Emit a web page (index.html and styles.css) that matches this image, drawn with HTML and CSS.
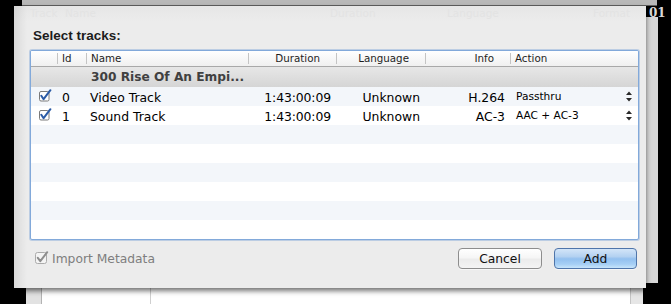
FILE: index.html
```html
<!DOCTYPE html>
<html>
<head>
<meta charset="utf-8">
<link rel="stylesheet" href="styles.css">
</head>
<body>
<div class="desk">
  <div class="titlebar"></div>
  <div class="winbody">
    <div class="wb-black"></div>
    <div class="wb-side"></div>
    <div class="wb-list"><div class="wb-col"></div><div class="wb-col2"></div></div>
    <div class="wb-scroll"></div>
    <div class="wb-gap"></div>
    <div class="wb-right"><span class="corner-text">01</span></div>
  </div>

  <div class="sheet">
    <div class="ghost">
      <span class="g1">Track</span><span class="g2">Name</span><span class="g3">Duration</span><span class="g4">Language</span><span class="g5">Format</span>
    </div>
    <div class="title">Select tracks:</div>

    <div class="table">
      <div class="row thead">
        <div class="th"></div>
        <div class="th sep">Id</div>
        <div class="th sep">Name</div>
        <div class="th sep right">Duration</div>
        <div class="th sep right">Language</div>
        <div class="th sep right">Info</div>
        <div class="th sep">Action</div>
      </div>
      <div class="group">300 Rise Of An Empi...</div>

      <div class="row alt">
        <div class="td cbcell"><svg class="cb" width="13" height="13" viewBox="0 0 13 13"><rect x="0.5" y="2.5" width="9.5" height="9.5" rx="1.5" fill="#fff" stroke="#7a7a7a"/><path d="M2.3 6.8 L4.6 10.2 L11.4 1.2" fill="none" stroke="#2b5ba6" stroke-width="2" stroke-linecap="round" stroke-linejoin="round"/></svg></div>
        <div class="td id">0</div>
        <div class="td name">Video Track</div>
        <div class="td right dur">1:43:00:09</div>
        <div class="td right">Unknown</div>
        <div class="td right">H.264</div>
        <div class="td action"><span>Passthru</span><svg class="arrows" width="6" height="11" viewBox="0 0 6 11"><path d="M0 4 L3 0.5 L6 4 Z M0 7 L6 7 L3 10.5 Z" fill="#2a2a2a"/></svg></div>
      </div>
      <div class="row">
        <div class="td cbcell"><svg class="cb" width="13" height="13" viewBox="0 0 13 13"><rect x="0.5" y="2.5" width="9.5" height="9.5" rx="1.5" fill="#fff" stroke="#7a7a7a"/><path d="M2.3 6.8 L4.6 10.2 L11.4 1.2" fill="none" stroke="#2b5ba6" stroke-width="2" stroke-linecap="round" stroke-linejoin="round"/></svg></div>
        <div class="td id">1</div>
        <div class="td name">Sound Track</div>
        <div class="td right dur">1:43:00:09</div>
        <div class="td right">Unknown</div>
        <div class="td right">AC-3</div>
        <div class="td action"><span>AAC + AC-3</span><svg class="arrows" width="6" height="11" viewBox="0 0 6 11"><path d="M0 4 L3 0.5 L6 4 Z M0 7 L6 7 L3 10.5 Z" fill="#2a2a2a"/></svg></div>
      </div>
      <div class="row alt"></div>
      <div class="row"></div>
      <div class="row alt"></div>
      <div class="row"></div>
      <div class="row alt"></div>
      <div class="row"></div>
    </div>

    <div class="footer">
      <label class="import">
        <svg class="cb-dis" width="14" height="14" viewBox="0 0 14 14"><rect x="0.5" y="1.5" width="11" height="11" rx="2" fill="#f4f4f4" stroke="#ababab"/><path d="M2.8 6.8 L5.3 10.2 L12.2 1.2" fill="none" stroke="#8e8e8e" stroke-width="2" stroke-linecap="round" stroke-linejoin="round"/></svg>
        <span>Import Metadata</span>
      </label>
      <div class="buttons">
        <div class="btn cancel">Cancel</div>
        <div class="btn add">Add</div>
      </div>
    </div>
  </div>
</div>
</body>
</html>
```

FILE: styles.css
```css
html, body {
  margin: 0;
  padding: 0;
  background: #000;
}

.desk {
  position: relative;
  width: 671px;
  height: 304px;
  overflow: hidden;
  display: flex;
  flex-direction: column;
  background: #000;
  font-family: "DejaVu Sans", sans-serif;
}

.titlebar {
  margin-left: 22px;
  width: 635px;
  height: 5px;
  background: #b8b8b8;
  border-bottom: 1px solid #5e5e5e;
  flex: none;
}

.winbody {
  flex: 1;
  display: flex;
}

.wb-black { width: 26px; }

.wb-side {
  width: 15px;
  background: #e2e2e2;
  border-right: 1px solid #b3b3b3;
}

.wb-list {
  width: 588px;
  background: #fff;
  display: grid;
  grid-template-columns: 109px 1fr;
}

.wb-col {
  border-right: 1px solid #cfcfcf;
}

.wb-scroll {
  width: 12px;
  background: #e6e6e6;
  border-left: 1px solid #c4c4c4;
}

.wb-gap { width: 3px; }

.wb-right {
  width: 12px;
  background: linear-gradient(to bottom, #000 0, #000 11px, #d7d7d7 11px, #d7d7d7 277px, #000 277px);
}

.corner-text {
  display: block;
  padding-left: 3px;
  font-family: "DejaVu Serif", serif;
  font-weight: bold;
  font-size: 12px;
  line-height: 12px;
  color: #d8d8d8;
  white-space: nowrap;
  margin-top: 1px;
}

/* Sheet */
.sheet {
  position: absolute;
  left: 14px;
  top: 6px;
  width: 632px;
  height: 282px;
  box-sizing: border-box;
  padding: 0 7px 0 16px;
  background:
    linear-gradient(to right, rgba(0,0,0,0.08), rgba(0,0,0,0) 13px),
    linear-gradient(to bottom, #e6e6e6, #ececec 16px);
  background-color: #ececec;
  box-shadow: 0 3px 5px rgba(0,0,0,0.55);
  display: flex;
  flex-direction: column;
}

.ghost {
  height: 16px;
  display: flex;
  font-size: 10.5px;
  line-height: 14px;
  color: #e3e3e3;
  white-space: nowrap;
  overflow: hidden;
}
.ghost .g1 { width: 35px; }
.ghost .g2 { width: 265px; }
.ghost .g3 { width: 117px; }
.ghost .g4 { width: 146px; }

.title {
  padding: 6px 0 0 3px;
  height: 22px;
  font-family: "Liberation Sans", sans-serif;
  font-weight: bold;
  font-size: 13.5px;
  line-height: 16px;
  color: #1c1c1c;
}

/* Table */
.table {
  width: 609px;
  height: 190px;
  box-sizing: border-box;
  border: 1px solid #82a9da;
  border-radius: 2px;
  box-shadow: 0 0 0 1px rgba(130, 169, 218, 0.45);
  background: #fff;
  overflow: hidden;
  flex: none;
}

.row {
  display: grid;
  grid-template-columns: 26px 29px 162px 88px 89px 85px 1fr;
  height: 19px;
  align-items: center;
  font-size: 12.4px;
  line-height: 19px;
  color: #000;
}

.row.alt { background: #f3f6fa; }

.thead {
  height: 15px;
  line-height: 15px;
  border-bottom: 1px solid #a9a9a9;
  background: linear-gradient(#ffffff, #f0f0f0);
  font-size: 10.3px;
  color: #1e1e1e;
}

.th {
  height: 15px;
  padding-left: 5px;
  box-sizing: border-box;
  white-space: nowrap;
}

.th.sep {
  background: linear-gradient(#c4c4c4, #c4c4c4) no-repeat 0 2px / 1px 11px;
}

.th.right {
  text-align: right;
  padding-left: 0;
  padding-right: 16px;
}

.group {
  height: 20px;
  box-sizing: border-box;
  padding: 1px 0 0 60px;
  line-height: 19px;
  background: linear-gradient(#e7e7e7, #d5d5d5);
  font-weight: bold;
  font-size: 12.2px;
  color: #404040;
  white-space: nowrap;
}

.td {
  height: 19px;
  padding-top: 1px;
  box-sizing: border-box;
  white-space: nowrap;
}

.td.cbcell {
  padding: 0 0 0 8px;
  display: flex;
  align-items: center;
}

.cb { display: block; margin-top: -2px; }

.td.id { padding-left: 5px; }
.td.name { padding-left: 4px; }

.td.right {
  text-align: right;
  padding-right: 5px;
}

.td.dur { letter-spacing: -0.1px; }

.td.action {
  display: flex;
  align-items: center;
  justify-content: space-between;
  padding: 0 6px 0 6px;
  font-size: 10.6px;
}

.arrows { display: block; }

/* Footer */
.footer {
  margin-top: 8px;
  height: 21px;
  display: flex;
  align-items: center;
  padding-right: 2px;
}

.import {
  display: flex;
  align-items: center;
  gap: 3px;
  padding-left: 5px;
  font-size: 12.3px;
  color: #7e7e7e;
}

.cb-dis { display: block; margin-top: -1px; }

.buttons {
  margin-left: auto;
  display: flex;
  gap: 12px;
}

.btn {
  height: 21px;
  box-sizing: border-box;
  border-radius: 4px;
  display: flex;
  align-items: center;
  justify-content: center;
  font-size: 12.3px;
  color: #111;
}

.btn.cancel {
  width: 84px;
  border: 1px solid #8d8d8d;
  background: linear-gradient(#ffffff 0%, #f6f6f6 45%, #ececec 55%, #f4f4f4 100%);
  box-shadow: 0 1px 0 rgba(255,255,255,0.6);
}

.btn.add {
  width: 83px;
  border: 1px solid #4f75aa;
  background: linear-gradient(#d3e5f8 0%, #b3d1f1 40%, #93c0ef 52%, #a6cff5 80%, #c8e5fb 100%);
  box-shadow: 0 1px 0 rgba(255,255,255,0.5);
}
```
